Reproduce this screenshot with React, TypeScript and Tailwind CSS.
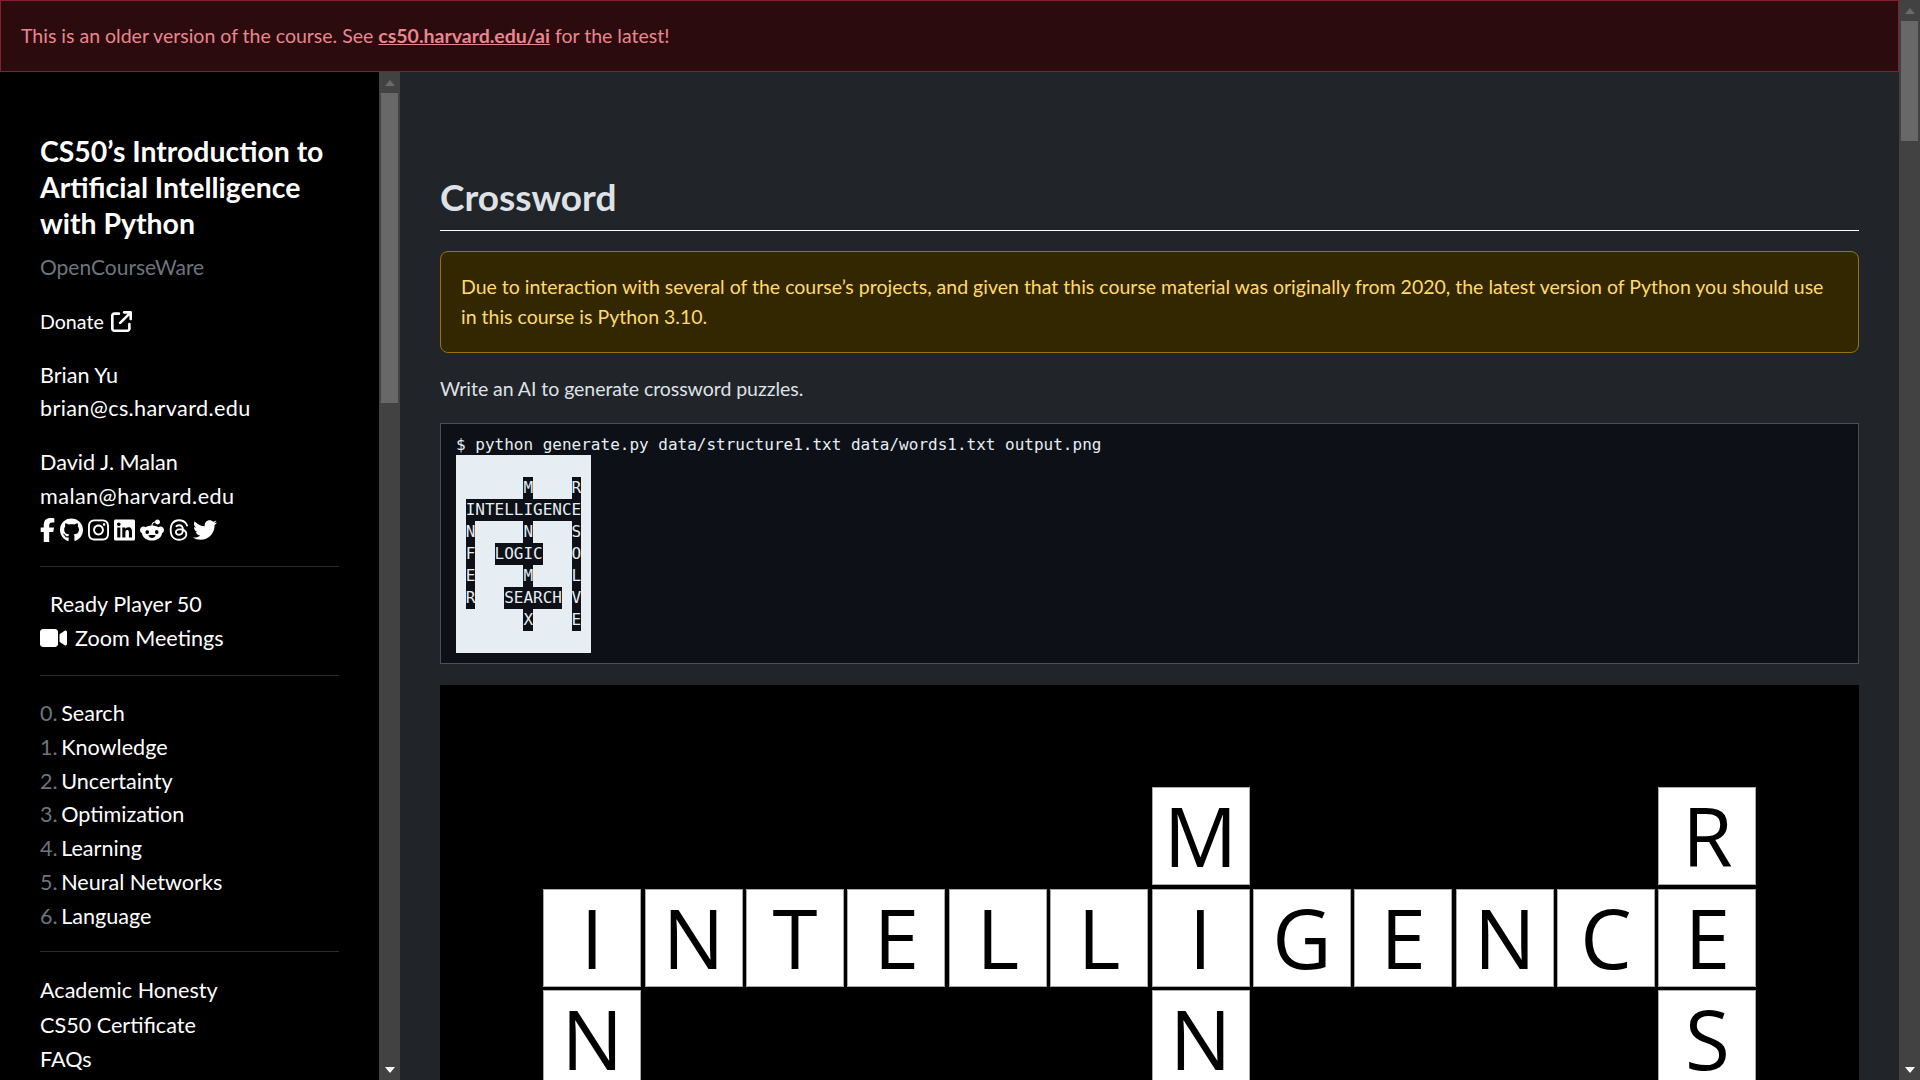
import { FaArrowUpRightFromSquare, FaFacebookF, FaGithub, FaInstagram, FaLinkedin, FaRedditAlien, FaThreads, FaTwitter, FaVideo } from "react-icons/fa6";

const puzzle = [
  "##############",
  "#######M####R#",
  "#INTELLIGENCE#",
  "#N#####N####S#",
  "#F##LOGIC###O#",
  "#E#####M####L#",
  "#R###SEARCH#V#",
  "#######X####E#",
  "##############",
];

const lectures = ["Search", "Knowledge", "Uncertainty", "Optimization", "Learning", "Neural Networks", "Language"];

// the browser hides native scrollbars here, so the strip is drawn
function Scrollbar({ thumb }: { thumb: string }) {
  return (
    <div className="flex h-full w-[21px] shrink-0 flex-col bg-[#424242]">
      <div className="flex h-[21px] items-center justify-center">
        <div className="h-0 w-0 border-x-[5px] border-b-[6px] border-x-transparent border-b-[#6a6a6a]" />
      </div>
      <div className="flex-1 px-[2px]">
        <div className={`bg-[#686868] ${thumb}`} />
      </div>
      <div className="flex h-[21px] items-center justify-center">
        <div className="h-0 w-0 border-x-[5px] border-t-[6px] border-x-transparent border-t-white" />
      </div>
    </div>
  );
}

function Sidebar() {
  return (
    <div className="flex h-[1008px] w-[400px] shrink-0">
      <nav className="min-w-0 flex-1 overflow-hidden bg-black px-10 pt-[61px] text-[21.6px] leading-[33.8px] text-white">
        <h2 className="text-[28.4px] font-bold leading-[36px]">CS50’s Introduction to Artificial Intelligence with Python</h2>
        <p className="mt-[9px] text-[21px] text-[#6c757d]">OpenCourseWare</p>
        <p className="mt-[21px] flex items-center text-[19.6px]">
          Donate
          <FaArrowUpRightFromSquare className="ml-[7px] h-[21px] w-[21px]" />
        </p>
        <p className="mt-[20px]">Brian Yu</p>
        <p className="tracking-[0.37px]">brian@cs.harvard.edu</p>
        <p className="mt-[20px]">David J. Malan</p>
        <p className="tracking-[0.45px]">malan@harvard.edu</p>
        <div className="flex h-[32px] items-center gap-[5px]">
          <FaFacebookF className="h-6 w-[15px]" />
          <FaGithub className="h-6 w-[23px]" />
          <FaInstagram className="h-6 w-[21px]" />
          <FaLinkedin className="h-6 w-[21px]" />
          <FaRedditAlien className="h-6 w-6" />
          <FaThreads className="h-6 w-[20px]" />
          <FaTwitter className="-ml-[1px] h-6 w-6" />
        </div>
        <hr className="mt-[20px] border-[#2b2b2b]" />
        <p className="mt-[21px] pl-[10px]">Ready Player 50</p>
        <p className="flex items-center">
          <FaVideo className="mr-[8px] h-6 w-[27px]" />
          Zoom Meetings
        </p>
        <hr className="mt-[20px] border-[#2b2b2b]" />
        <ol className="mt-[21px] leading-[33.7px]">
          {lectures.map((name, i) => (
            <li key={name}>
              <span className="mr-[-2px] text-[#6c757d]">{i}.</span> {name}
            </li>
          ))}
        </ol>
        <hr className="mt-[18px] border-[#2b2b2b]" />
        <div className="mt-[21px] leading-[34.2px]">
          <p>Academic Honesty</p>
          <p>CS50 Certificate</p>
          <p>FAQs</p>
        </div>
      </nav>
      <Scrollbar thumb="h-[310px]" />
    </div>
  );
}

function TerminalPuzzle() {
  return (
    <div className="w-fit">
      {puzzle.map((row, r) => (
        <div key={r} className="flex">
          {row.split("").map((c, i) => (
            <span key={i} className={c === "#" ? "h-[22px] w-[9.63px] bg-[#e6edf3]" : "h-[22px] w-[9.63px] text-center leading-[22px]"}>
              {c === "#" ? "" : c}
            </span>
          ))}
        </div>
      ))}
    </div>
  );
}

function BigPuzzle() {
  return (
    <div className="mt-[21px] grid grid-cols-[repeat(14,98px)] gap-x-[3.4px] gap-y-[3.3px] bg-black pl-[1.8px] pt-[1px] font-['Open_Sans',sans-serif] text-[81.7px] leading-[95px] text-black">
      {puzzle.flatMap((row, r) =>
        row.split("").map((c, i) => (
          <div key={`${r}-${i}`} className={c === "#" ? "h-[98px]" : "h-[98px] border border-[#aaaaaa] bg-white text-center"}>
            {c === "#" ? "" : c}
          </div>
        ))
      )}
    </div>
  );
}

export default function App() {
  return (
    <div className="flex h-screen overflow-hidden bg-[#212529] font-['Lato',sans-serif] text-[19.5px] text-[#dee2e6]">
      <div className="min-w-0 flex-1">
        <div className="flex h-[72px] items-center border border-[#842029] bg-[#2c0b0e] px-5 text-[#ea868f]">
          <p>
            This is an older version of the course. See{" "}
            <a href="#" className="font-bold underline">cs50.harvard.edu/ai</a> for the latest!
          </p>
        </div>
        <div className="flex items-start">
          <Sidebar />
          <main className="min-w-0 flex-1 px-10 pt-[87px]">
            <h1 className="border-b border-white pb-[2px] pt-[7px] text-[37px] font-bold leading-[62px]">Crossword</h1>
            <div className="mt-[20px] rounded-lg border border-[#997404] bg-[#332701] p-5 leading-[30px] text-[#ffda6a]">
              Due to interaction with several of the course’s projects, and given that this course material was originally from 2020, the latest version of Python you should use in this course is Python 3.10.
            </div>
            <p className="mt-[21px] leading-[30px] tracking-[-0.05px]">Write an AI to generate crossword puzzles.</p>
            <pre className="mt-[19px] border border-[#495057] bg-[#0d1117] px-[15px] py-[10px] font-['DejaVu_Sans_Mono',monospace] text-[16px] leading-[21px] text-[#e6edf3]">
              <div>$ python generate.py data/structure1.txt data/words1.txt output.png</div>
              <TerminalPuzzle />
            </pre>
            <BigPuzzle />
          </main>
        </div>
      </div>
      <Scrollbar thumb="h-[120px]" />
    </div>
  );
}
